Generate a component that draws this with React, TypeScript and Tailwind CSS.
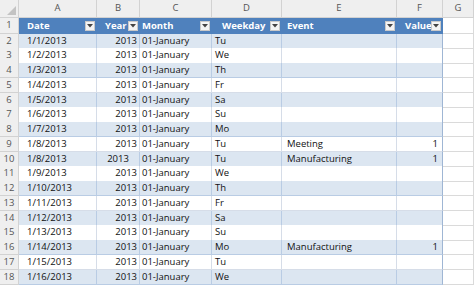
import React from "react";

const cols = "grid-cols-[19px_78px_43px_72px_70px_115px_46px_1fr]";

type Rec = { date: string; year: string; weekday: string; event?: string; value?: string; yearCenter?: boolean };

const rows: Rec[] = [
  { date: "1/1/2013", year: "2013", weekday: "Tu" },
  { date: "1/2/2013", year: "2013", weekday: "We" },
  { date: "1/3/2013", year: "2013", weekday: "Th" },
  { date: "1/4/2013", year: "2013", weekday: "Fr" },
  { date: "1/5/2013", year: "2013", weekday: "Sa" },
  { date: "1/6/2013", year: "2013", weekday: "Su" },
  { date: "1/7/2013", year: "2013", weekday: "Mo" },
  { date: "1/8/2013", year: "2013", weekday: "Tu", event: "Meeting", value: "1" },
  { date: "1/8/2013", year: "2013", weekday: "Tu", event: "Manufacturing", value: "1", yearCenter: true },
  { date: "1/9/2013", year: "2013", weekday: "We" },
  { date: "1/10/2013", year: "2013", weekday: "Th" },
  { date: "1/11/2013", year: "2013", weekday: "Fr" },
  { date: "1/12/2013", year: "2013", weekday: "Sa" },
  { date: "1/13/2013", year: "2013", weekday: "Su" },
  { date: "1/14/2013", year: "2013", weekday: "Mo", event: "Manufacturing", value: "1" },
  { date: "1/15/2013", year: "2013", weekday: "Tu" },
  { date: "1/16/2013", year: "2013", weekday: "We" },
];

function FilterButton() {
  return (
    <span className="absolute right-[2px] top-1/2 -translate-y-1/2 w-[10px] h-[10px] bg-[#f4f4f4] border border-[#c9c9c9] flex items-center justify-center">
      <svg width="6" height="4" viewBox="0 0 6 4">
        <path d="M0 0 L6 0 L3 3.5 Z" fill="#444" />
      </svg>
    </span>
  );
}

export default function App() {
  const rowNum = "flex items-center justify-center bg-[#efefef] text-[#555] border-r border-b border-[#d2d2d2]";
  return (
    <div className="w-[474px] h-[285px] overflow-hidden bg-white text-[9.5px] text-[#111]" style={{ fontFamily: '"Open Sans", "Liberation Sans", sans-serif' }}>
      {/* column letters */}
      <div className={`grid ${cols} h-[18px]`}>
        <div className="relative bg-[#efefef] border-r border-b border-[#d2d2d2]">
          <svg className="absolute right-[2px] bottom-[2px]" width="9" height="9" viewBox="0 0 9 9">
            <path d="M9 0 L9 9 L0 9 Z" fill="#c3c3c3" />
          </svg>
        </div>
        {["A", "B", "C", "D", "E", "F", "G"].map((c) => (
          <div key={c} className="flex items-center justify-center bg-[#efefef] text-[#555] border-r border-b border-[#d2d2d2]">
            {c}
          </div>
        ))}
      </div>

      {/* table header */}
      <div className={`grid ${cols} h-[15.5px]`}>
        <div className={rowNum}>1</div>
        <div className="relative flex items-center pl-[8px] bg-[#4f81bd] text-white font-bold">
          Date
          <FilterButton />
        </div>
        <div className="relative flex items-center pl-[8px] bg-[#4f81bd] text-white font-bold">
          Year
          <FilterButton />
        </div>
        <div className="relative flex items-center pl-[2px] bg-[#4f81bd] text-white font-bold">
          Month
          <FilterButton />
        </div>
        <div className="relative flex items-center pl-[10px] bg-[#4f81bd] text-white font-bold">
          Weekday
          <FilterButton />
        </div>
        <div className="relative flex items-center pl-[5px] bg-[#4f81bd] text-white font-bold">
          Event
          <FilterButton />
        </div>
        <div className="relative flex items-center pl-[8px] bg-[#4f81bd] text-white font-bold">
          Value
          <FilterButton />
        </div>
        <div className="border-r border-b border-[#dadada]" />
      </div>

      {rows.map((r, i) => {
        const band = i % 2 === 0;
        const cell = `flex items-center border-b border-r ${band ? "bg-[#dce6f1] border-[#b9cce4]" : "bg-white border-[#d6dde8]"}`;
        return (
          <div key={i} className={`grid ${cols} h-[14.75px]`}>
            <div className={rowNum}>{i + 2}</div>
            <div className={`${cell} pl-[8px]`}>{r.date}</div>
            <div className={`${cell} ${r.yearCenter ? "justify-center" : "justify-end pr-[2px]"}`}>{r.year}</div>
            <div className={`${cell} pl-[2px]`}>01-January</div>
            <div className={`${cell} pl-[3px]`}>{r.weekday}</div>
            <div className={`${cell} pl-[5px]`}>{r.event ?? ""}</div>
            <div className={`${cell} justify-end pr-[4px] border-r-[#9fb6d4]`}>{r.value ?? ""}</div>
            <div className="border-r border-b border-[#dadada]" />
          </div>
        );
      })}
    </div>
  );
}
